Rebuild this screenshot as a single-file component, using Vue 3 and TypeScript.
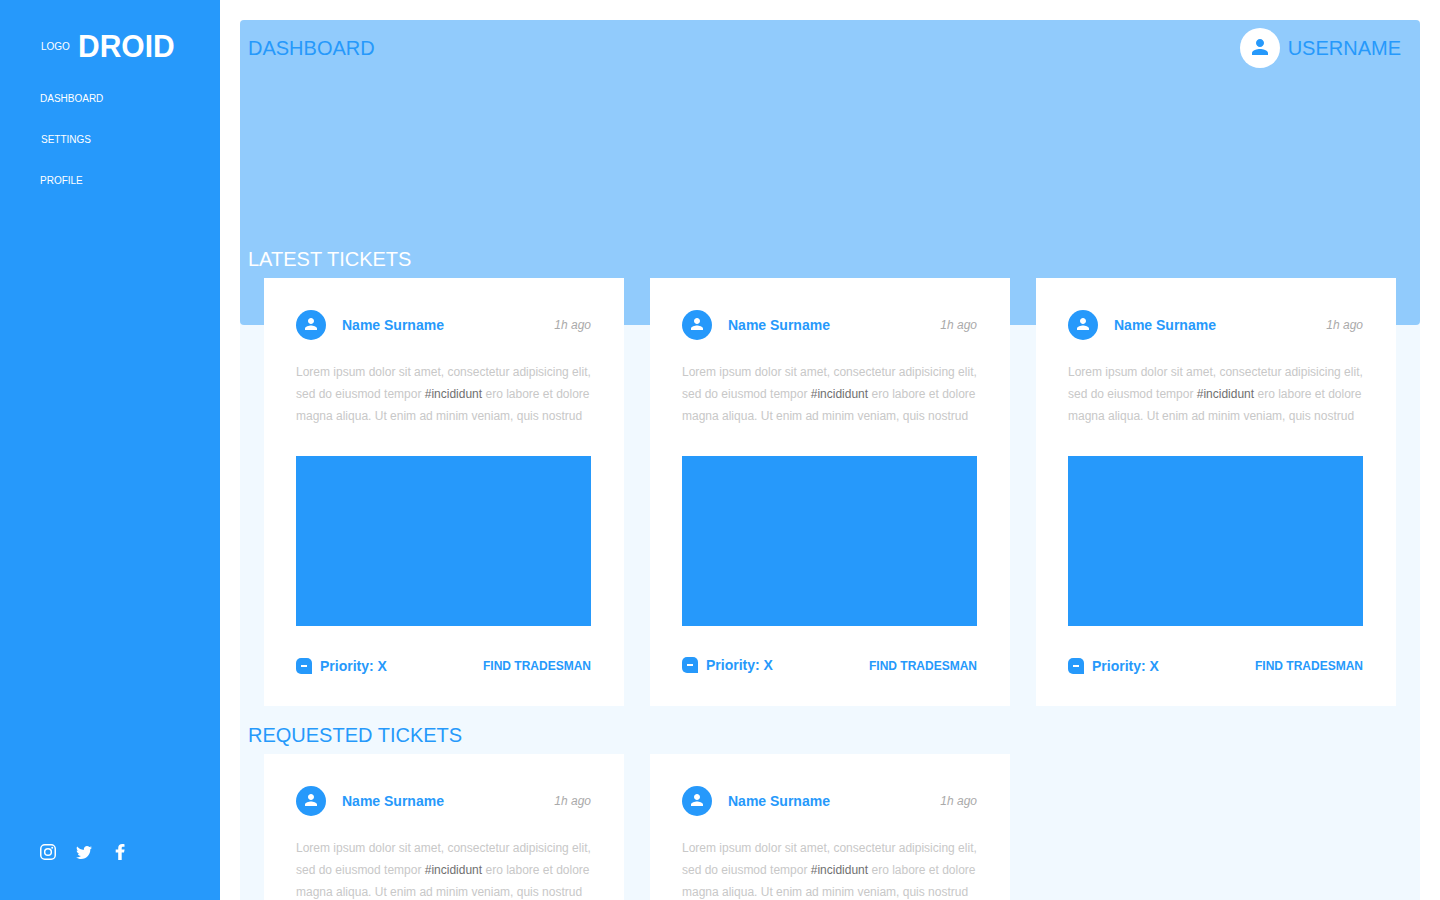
<script setup lang="ts">
interface Ticket {
  id: number
  raised?: boolean
}

interface Section {
  title: string
  kind: string
  tickets: Ticket[]
}

const links: string[] = ['DASHBOARD', 'SETTINGS', 'PROFILE']

const sections: Section[] = [
  { title: 'LATEST TICKETS', kind: 'latest', tickets: [{ id: 1 }, { id: 2, raised: true }, { id: 3 }] },
  { title: 'REQUESTED TICKETS', kind: 'requested', tickets: [{ id: 4 }, { id: 5, raised: true }] },
]
</script>

<template>
  <div class="app">
    <aside class="sidebar">
      <div class="brand">
        <span class="brand-logo">LOGO</span>
        <span class="brand-name">DROID</span>
      </div>
      <nav class="nav">
        <a v-for="link in links" :key="link" :class="['nav-link', link.toLowerCase()]">{{ link }}</a>
      </nav>
      <div class="social">
        <svg width="16" height="16" viewBox="0 0 16 16" fill="none" stroke="#fff">
          <rect x="0.75" y="0.75" width="14.5" height="14.5" rx="4" stroke-width="1.5" />
          <circle cx="8" cy="8" r="3.35" stroke-width="1.5" />
          <circle cx="12.2" cy="3.8" r="1" fill="#fff" stroke="none" />
        </svg>
        <svg width="16" height="16" viewBox="0 0 16 16" fill="#fff">
          <path d="M16 3.5c-.6.3-1.200.4-1.900.5.7-.4 1.200-1 1.400-1.800-.6.4-1.300.6-2.100.8-.6-.6-1.500-1-2.400-1-1.700 0-3.200 1.500-3.200 3.300 0 .3 0 .5.100.7-2.700-.1-5.200-1.400-6.800-3.400-.3.500-.4 1-.4 1.700 0 1.100.6 2.100 1.500 2.700-.5 0-1-.2-1.500-.4 0 1.600 1.100 2.900 2.600 3.200-.3.100-.6.100-.9.100-.2 0-.4 0-.6-.1.400 1.300 1.600 2.300 3.100 2.300-1.100.9-2.500 1.400-4.100 1.400H0c1.500.9 3.200 1.500 5 1.500 6 0 9.300-5 9.300-9.300v-.4c.7-.5 1.300-1.100 1.700-1.800z" />
        </svg>
        <svg width="16" height="16" viewBox="0 0 16 16" fill="#fff">
          <path d="M6.200 16V8.600H3.700V5.500h2.500V3.900C6.200 1.300 7.800 0 10.100 0c1.100 0 2.200.1 2.400.2v2.600h-1.400c-1.200 0-1.400.6-1.400 1.400v1.300h2.900l-.6 3.100H9.700V16z" />
        </svg>
      </div>
    </aside>

    <main class="content">
      <header class="banner">
        <h1 class="heading">DASHBOARD</h1>
        <div class="user">
          <span class="avatar large">
            <svg width="16" height="16" viewBox="0 0 16 16">
              <path d="M8 8c2.200 0 4-1.800 4-4s-1.800-4-4-4-4 1.800-4 4 1.800 4 4 4zm0 2c-2.700 0-8 1.300-8 4v2h16v-2c0-2.700-5.300-4-8-4z" />
            </svg>
          </span>
          <span class="heading">USERNAME</span>
        </div>
      </header>

      <section v-for="section in sections" :key="section.title" :class="['section', section.kind]">
        <h2 class="heading section-title">{{ section.title }}</h2>
        <div class="cards">
          <article v-for="ticket in section.tickets" :key="ticket.id" class="card">
            <div class="card-head">
              <span class="avatar">
                <svg width="12" height="12" viewBox="0 0 16 16">
                  <path d="M8 8c2.200 0 4-1.800 4-4s-1.800-4-4-4-4 1.800-4 4 1.800 4 4 4zm0 2c-2.700 0-8 1.300-8 4v2h16v-2c0-2.700-5.300-4-8-4z" />
                </svg>
              </span>
              <span class="name">Name Surname</span>
              <span class="time">1h ago</span>
            </div>
            <p class="text">
              Lorem ipsum dolor sit amet, consectetur adipisicing elit,<br />
              sed do eiusmod tempor <span class="tag">#incididunt</span> ero labore et dolore<br />
              magna aliqua. Ut enim ad minim veniam, quis nostrud
            </p>
            <div class="media"></div>
            <div class="card-foot">
              <div :class="['priority', { raised: ticket.raised }]">
                <svg width="16" height="16" viewBox="0 0 16 16">
                  <path fill="#2699fb" d="M5 0h6a5 5 0 0 1 5 5v11H5a5 5 0 0 1-5-5V5a5 5 0 0 1 5-5z" />
                  <path fill="#fff" d="M5 7h6v2H5z" />
                </svg>
                <span>Priority: X</span>
              </div>
              <span class="action">FIND TRADESMAN</span>
            </div>
          </article>
        </div>
      </section>
    </main>
  </div>
</template>

<style>
body {
  margin: 0;
  background: #fff;
}
</style>

<style scoped>
.app {
  display: flex;
  width: 1440px;
  height: 900px;
  overflow: hidden;
  font-family: "Liberation Sans", Arial, sans-serif;
  color: #2699fb;
}

.sidebar {
  box-sizing: border-box;
  display: flex;
  flex-direction: column;
  width: 220px;
  flex: none;
  padding: 28px 40px 40px;
  background: #2699fb;
  color: #fff;
}

.brand {
  display: flex;
  align-items: center;
  height: 36px;
  padding-left: 1px;
}

.brand-logo {
  width: 37px;
  font-size: 10px;
}

.brand-name {
  font-size: 30px;
  font-weight: 700;
  transform: scaleY(1.06);
}

.nav {
  display: flex;
  flex-direction: column;
  gap: 29px;
  margin-top: 29px;
  font-size: 10px;
  line-height: 12px;
}

.nav-link.settings {
  padding-left: 1px;
}

.social {
  display: flex;
  gap: 20px;
  margin-top: auto;
}

.content {
  width: 1180px;
  height: 880px;
  flex: none;
  margin: 20px 20px 0;
  background: #f1f9ff;
  border-radius: 4px 4px 0 0;
}

.banner {
  box-sizing: border-box;
  display: flex;
  justify-content: space-between;
  align-items: flex-start;
  height: 305px;
  padding: 8px 19px 0 8px;
  border-radius: 4px;
  background: #91cbfc;
}

.heading {
  margin: 0;
  font-size: 20px;
  font-weight: 400;
  line-height: 40px;
}

.user {
  display: flex;
  gap: 8px;
}

.avatar {
  box-sizing: border-box;
  display: flex;
  justify-content: center;
  align-items: center;
  width: 30px;
  height: 30px;
  flex: none;
  padding-bottom: 2px;
  border-radius: 50%;
  background: #2699fb;
  fill: #fff;
}

.avatar.large {
  width: 40px;
  height: 40px;
  background: #fff;
  fill: #2699fb;
}

.section.latest {
  margin-top: -78px;
}

.section.requested {
  margin-top: 17px;
}

.section-title {
  height: 31px;
  padding-left: 8px;
  line-height: 24px;
}

.latest .section-title {
  color: #fff;
}

.cards {
  display: grid;
  grid-template-columns: repeat(3, 360px);
  gap: 26px;
  padding-left: 24px;
}

.card {
  box-sizing: border-box;
  height: 428px;
  padding: 32px 33px 0 32px;
  background: #fff;
}

.card-head {
  display: flex;
  align-items: center;
}

.name {
  margin-left: 16px;
  font-size: 14px;
  font-weight: 700;
}

.time {
  margin-left: auto;
  font-size: 12px;
  font-style: italic;
  color: #aaa;
}

.text {
  margin: 21px 0 0;
  font-size: 12px;
  line-height: 22px;
  color: #c8c8c8;
  white-space: nowrap;
}

.tag {
  color: #707070;
}

.media {
  height: 170px;
  margin-top: 29px;
  background: #2699fb;
}

.card-foot {
  display: flex;
  justify-content: space-between;
  align-items: flex-start;
  margin-top: 32px;
}

.priority {
  display: flex;
  align-items: center;
  gap: 8px;
  height: 16px;
  font-size: 14px;
  font-weight: 700;
}

.priority.raised {
  margin-top: -1px;
}

.action {
  font-size: 12px;
  font-weight: 700;
  line-height: 16px;
}
</style>
